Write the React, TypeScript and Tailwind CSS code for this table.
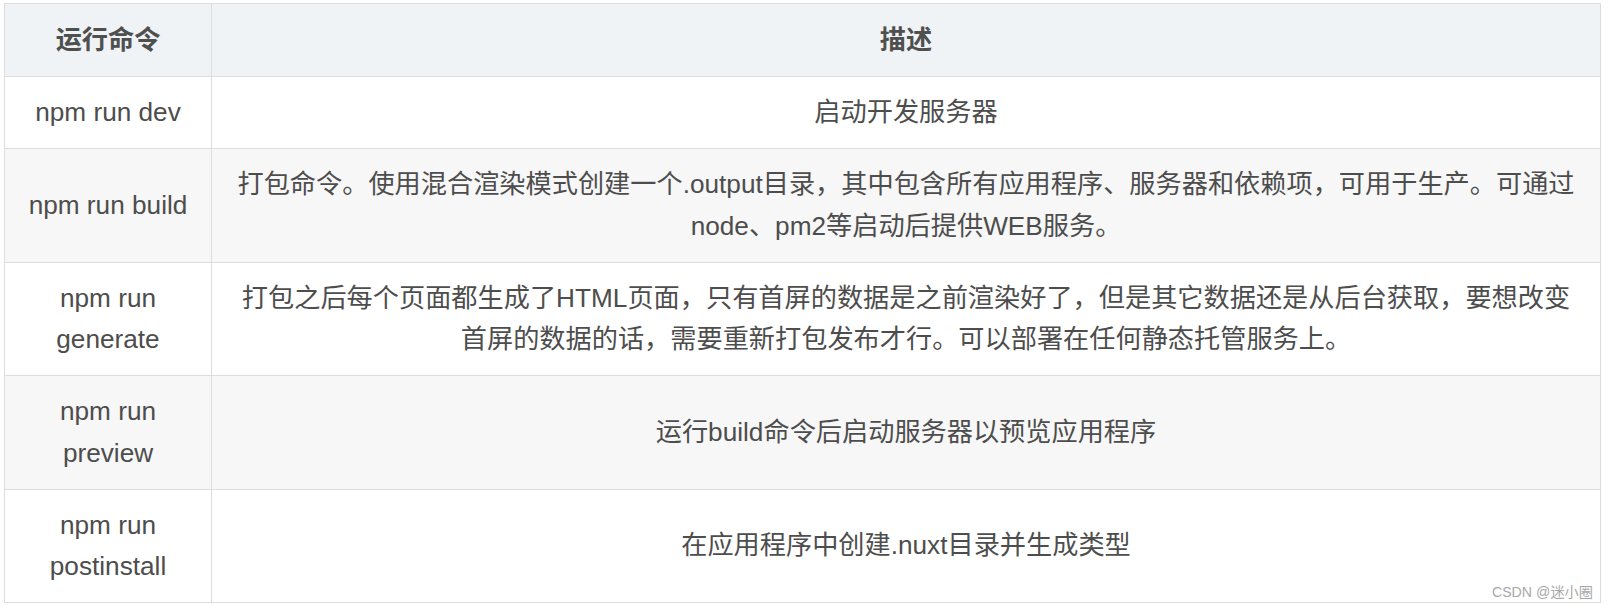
type Row = {
  cmd: string[];
  desc: string;
};

const rows: Row[] = [
  { cmd: ['npm run dev'], desc: '启动开发服务器' },
  {
    cmd: ['npm run build'],
    desc: '打包命令。使用混合渲染模式创建一个.output目录，其中包含所有应用程序、服务器和依赖项，可用于生产。可通过node、pm2等启动后提供WEB服务。',
  },
  {
    cmd: ['npm run', 'generate'],
    desc: '打包之后每个页面都生成了HTML页面，只有首屏的数据是之前渲染好了，但是其它数据还是从后台获取，要想改变首屏的数据的话，需要重新打包发布才行。可以部署在任何静态托管服务上。',
  },
  { cmd: ['npm run', 'preview'], desc: '运行build命令后启动服务器以预览应用程序' },
  { cmd: ['npm run', 'postinstall'], desc: '在应用程序中创建.nuxt目录并生成类型' },
];

export default function App() {
  return (
    <div className="relative w-[1608px] h-[607px] bg-white pl-[4px] pt-[3px] font-['Liberation_Sans','Noto_Sans_CJK_SC',sans-serif] text-[#4d4d4d]">
      <div className="w-[1597px] border border-[#dddddd] grid grid-cols-[207px_1fr]">
        {/* header */}
        <div className="bg-[#eff3f5] border-r border-[#dddddd] flex items-center justify-center px-[20px] py-[15px] text-[26.2px] leading-[42px] font-bold text-[#4f4f4f]">
          运行命令
        </div>
        <div className="bg-[#eff3f5] flex items-center justify-center px-[20px] py-[15px] text-[26.2px] leading-[42px] font-bold text-[#4f4f4f]">
          描述
        </div>

        {rows.map((row, i) => {
          const bg = i % 2 === 1 ? 'bg-[#f7f7f7]' : 'bg-white';
          return (
            <div key={i} className="contents">
              <div
                className={`${bg} border-t border-r border-[#dddddd] flex flex-col items-center justify-center px-[20px] py-[15px] text-[26.2px] leading-[41.25px] text-center`}
              >
                {row.cmd.map((line) => (
                  <span key={line}>{line}</span>
                ))}
              </div>
              <div
                className={`${bg} border-t border-[#dddddd] flex items-center justify-center px-[20px] py-[15px] text-[26.2px] leading-[41.25px] text-center`}
              >
                <p>{row.desc}</p>
              </div>
            </div>
          );
        })}
      </div>

      {/* watermark */}
      <span className="absolute right-[15px] bottom-[7px] text-[14.2px] leading-[16px] text-[#a8a8a8]">
        CSDN @迷小圈
      </span>
    </div>
  );
}
